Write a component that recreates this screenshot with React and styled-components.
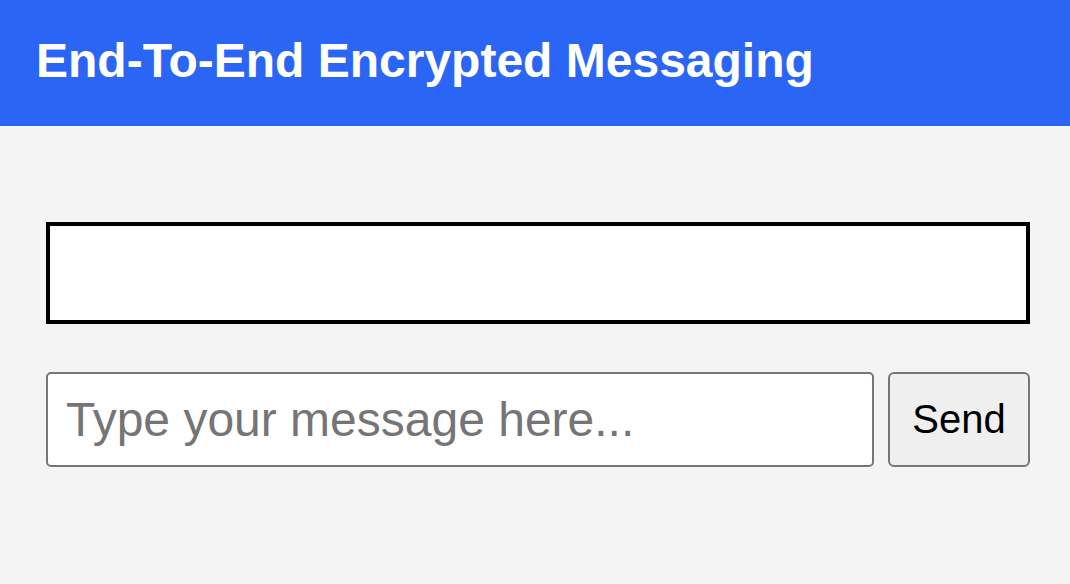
import React, { useState } from "react";
import styled, { createGlobalStyle } from "styled-components";

const Global = createGlobalStyle`
  html, body { margin: 0; padding: 0; background: #f4f4f4; }
  body { font-family: "Liberation Sans", Arial, sans-serif; }
`;

const Header = styled.header`
  height: 126px;
  background: #2b65f6;
  display: flex;
  align-items: center;
  padding: 0 36px;
  box-sizing: border-box;
`;

const Title = styled.h1`
  margin: 0 0 5px;
  color: #ffffff;
  font-size: 48px;
  font-weight: 700;
  line-height: 1;
  letter-spacing: 0;
`;

const Main = styled.main`
  padding: 96px 40px 0 46px;
`;

const MessageBox = styled.div`
  height: 102px;
  box-sizing: border-box;
  background: #ffffff;
  border: 4px solid #000000;
`;

const Row = styled.form`
  margin-top: 48px;
  display: flex;
  gap: 14px;
  height: 95px;
`;

const Input = styled.input`
  flex: 1;
  min-width: 0;
  box-sizing: border-box;
  height: 100%;
  border: 2px solid #767676;
  border-radius: 5px;
  background: #ffffff;
  padding: 0 18px;
  font-family: "Liberation Sans", Arial, sans-serif;
  font-size: 48px;
  color: #000;
  outline: none;
  &::placeholder { color: #757575; }
`;

const Button = styled.button`
  width: 142px;
  height: 100%;
  box-sizing: border-box;
  border: 2px solid #767676;
  border-radius: 6px;
  background: #efefef;
  font-family: "Liberation Sans", Arial, sans-serif;
  font-size: 40px;
  color: #000;
  padding: 0;
  cursor: pointer;
`;

export default function App() {
  const [text, setText] = useState("");
  return (
    <>
      <Global />
      <Header>
        <Title>End-To-End Encrypted Messaging</Title>
      </Header>
      <Main>
        <MessageBox />
        <Row onSubmit={(e) => e.preventDefault()}>
          <Input
            value={text}
            onChange={(e) => setText(e.target.value)}
            placeholder="Type your message here..."
          />
          <Button type="submit">Send</Button>
        </Row>
      </Main>
    </>
  );
}
